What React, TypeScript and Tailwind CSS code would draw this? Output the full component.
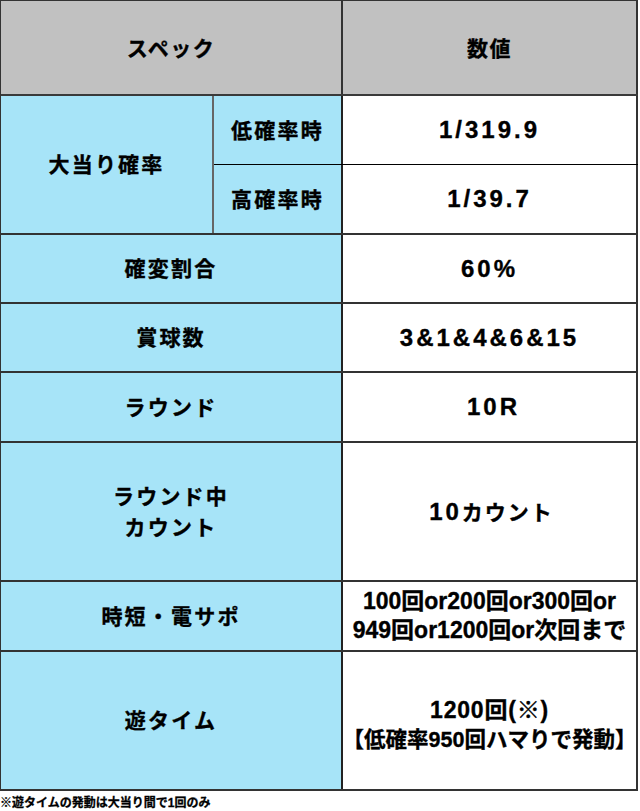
import React from "react";

const FONT = { fontFamily: '"Liberation Sans", "Noto Sans CJK JP", sans-serif' };

const labelCls =
  "flex items-center justify-center text-center bg-[#a7e4f8] text-[21px] tracking-[2.2px] font-bold text-black leading-[31px] [-webkit-text-stroke:0.35px_#000]";
const valueCls =
  "flex items-center justify-center text-center bg-white font-bold text-black whitespace-nowrap [-webkit-text-stroke:0.35px_#000]";

function Row({
  h,
  label,
  children,
  valueExtra = "text-[24px] tracking-[3px]",
}: {
  h: string;
  label: React.ReactNode;
  children: React.ReactNode;
  valueExtra?: string;
}) {
  return (
    <div className={`flex ${h} border-b-2 border-[#333]`}>
      <div className={`${labelCls} w-[342px] border-r-2 border-[#222]`}>{label}</div>
      <div className={`${valueCls} ${valueExtra} w-[295px] border-r-2 border-[#333]`}>{children}</div>
    </div>
  );
}

export default function App() {
  return (
    <div className="w-[640px] h-[811px] bg-white" style={FONT}>
      <div className="w-[638px] border-t border-l border-[#333]">
        {/* header */}
        <div className="flex h-[95px] border-b-2 border-[#3a3a3a] bg-[#c1c1c1]">
          <div className="flex items-center justify-center pt-[3px] w-[342px] border-r-2 border-[#333] text-[21px] tracking-[1.5px] font-bold text-black [-webkit-text-stroke:0.35px_#000]">
            スペック
          </div>
          <div className="flex items-center justify-center pt-[3px] w-[295px] border-r-2 border-[#333] text-[21px] tracking-[1.5px] font-bold text-black [-webkit-text-stroke:0.35px_#000]">
            数値
          </div>
        </div>

        {/* 大当り確率 */}
        <div className="flex h-[139px] border-b-2 border-[#333]">
          <div className={`${labelCls} w-[213px] border-r-2 border-[#666]`}>大当り確率</div>
          <div className="flex flex-col">
            <div className="flex h-[69px] border-b border-black">
              <div className={`${labelCls} w-[129px] border-r-2 border-[#222]`}>低確率時</div>
              <div className={`${valueCls} text-[24px] tracking-[3px] w-[295px] border-r-2 border-[#333]`}>1/319.9</div>
            </div>
            <div className="flex h-[68px]">
              <div className={`${labelCls} w-[129px] border-r-2 border-[#222]`}>高確率時</div>
              <div className={`${valueCls} text-[24px] tracking-[3px] w-[295px] border-r-2 border-[#333]`}>1/39.7</div>
            </div>
          </div>
        </div>

        <Row h="h-[69px]" label="確変割合">60%</Row>
        <Row h="h-[69px]" label="賞球数">3&amp;1&amp;4&amp;6&amp;15</Row>
        <Row h="h-[70px]" label="ラウンド">
          <span className="pl-[8px]">10R</span>
        </Row>
        <Row
          h="h-[139px]"
          label={
            <span>
              ラウンド中
              <br />
              カウント
            </span>
          }
        >
          <span className="pl-[4px]">
            10<span className="text-[21px] tracking-[2px]">カウント</span>
          </span>
        </Row>
        <Row h="h-[70px]" label="時短・電サポ" valueExtra="text-[23px] tracking-[0px] leading-[29px]">
          <span>
            100回or200回or300回or
            <br />
            949回or1200回or次回まで
          </span>
        </Row>
        <Row h="h-[139px]" label="遊タイム" valueExtra="text-[23px] leading-[29px]">
          <span className="pt-[10px]">
            <span className="text-[23px] tracking-[0.8px]">1200回(※)</span>
            <br />
            <span className="text-[21.5px]">【低確率950回ハマりで発動】</span>
          </span>
        </Row>
      </div>
      <div className="h-[23px] flex items-center text-[12px] font-bold text-black leading-none [-webkit-text-stroke:0.3px_#000]">
        ※遊タイムの発動は大当り間で1回のみ
      </div>
    </div>
  );
}
